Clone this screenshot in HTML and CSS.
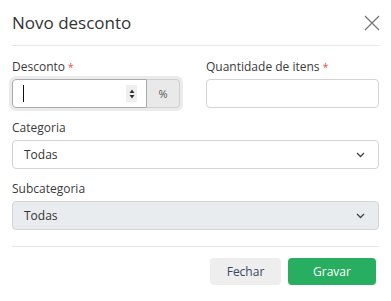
FILE: index.html
```html
<!DOCTYPE html>
<html>

<head>
    <title>Novo desconto</title>
    <link rel="stylesheet" href="styles.css">
</head>

<body>
    <div class="modal">
        <div class="modal-header">
            <h4 class="modal-title">Novo desconto</h4>
            <button class="close" type="button">
                <svg width="16" height="16" viewBox="0 0 16 16">
                    <path d="M1 1 L15 15 M15 1 L1 15" stroke="#777" stroke-width="1.3" fill="none" />
                </svg>
            </button>
        </div>

        <div class="modal-body">
            <div class="row two">
                <div class="group">
                    <label>Desconto <span class="req">*</span></label>
                    <div class="input-group focused">
                        <div class="form-control number">
                            <span class="caret"></span>
                            <span class="spin">
                                <svg width="8" height="12" viewBox="0 0 8 12">
                                    <path d="M1.5 5 L4 1.5 L6.5 5 Z M1.5 7 L4 10.5 L6.5 7 Z" fill="#333" />
                                </svg>
                            </span>
                        </div>
                        <span class="addon">%</span>
                    </div>
                </div>
                <div class="group">
                    <label>Quantidade de itens <span class="req">*</span></label>
                    <div class="form-control"></div>
                </div>
            </div>

            <div class="group">
                <label>Categoria</label>
                <div class="form-control select">
                    <span>Todas</span>
                    <svg width="9" height="6" viewBox="0 0 9 6">
                        <path d="M1 1 L4.5 4.5 L8 1" stroke="#444" stroke-width="1.3" fill="none" />
                    </svg>
                </div>
            </div>

            <div class="group">
                <label>Subcategoria</label>
                <div class="form-control select disabled">
                    <span>Todas</span>
                    <svg width="9" height="6" viewBox="0 0 9 6">
                        <path d="M1 1 L4.5 4.5 L8 1" stroke="#444" stroke-width="1.3" fill="none" />
                    </svg>
                </div>
            </div>
        </div>

        <div class="modal-footer">
            <button class="btn btn-light">Fechar</button>
            <button class="btn btn-success">Gravar</button>
        </div>
    </div>
</body>

</html>
```

FILE: styles.css
```css
* {
    box-sizing: border-box;
}

body {
    margin: 0;
    background: #fff;
    font-family: "Open Sans", "DejaVu Sans", sans-serif;
    color: #333;
}

.modal {
    width: 391px;
    padding: 0 12px;
}

.modal-header {
    display: flex;
    align-items: center;
    justify-content: space-between;
    height: 46px;
    border-bottom: 1px solid #e6e6e6;
}

.modal-title {
    margin: 0;
    font-size: 17px;
    font-weight: 400;
    color: #333;
}

.close {
    border: 0;
    background: none;
    padding: 0;
    margin-right: -1px;
    display: flex;
}

.modal-body {
    padding: 12px 0 5px;
}

.row.two {
    display: grid;
    grid-template-columns: 168px 1fr;
    gap: 26px;
}

.group {
    margin-bottom: 11px;
}

label {
    display: block;
    font-size: 12px;
    line-height: 18px;
    margin-bottom: 3px;
    color: #3a3a3a;
}

.req {
    color: #e74c3c;
    font-size: 10px;
}

.form-control {
    height: 29px;
    border: 1px solid #d4d4d4;
    border-radius: 4px;
    background: #fff;
    font-size: 12px;
    padding: 0 12px;
    display: flex;
    align-items: center;
}

.input-group {
    display: flex;
    border-radius: 4px;
}

.input-group.focused {
    box-shadow: 0 0 0 3px #ebebeb;
}

.input-group .form-control {
    flex: 1;
    border-radius: 4px 0 0 4px;
    border-color: #aaa;
    justify-content: space-between;
    padding: 0 9px 0 10px;
}

.caret {
    width: 1px;
    height: 17px;
    background: #111;
}

.spin {
    display: flex;
    align-items: center;
    justify-content: center;
    width: 11px;
    height: 17px;
    background: #efefef;
}

.addon {
    width: 33px;
    height: 29px;
    display: flex;
    align-items: center;
    justify-content: center;
    font-size: 11px;
    color: #555;
    background: #e9e9e9;
    border: 1px solid #cfcfcf;
    border-left: 0;
    border-radius: 0 4px 4px 0;
}

.select {
    justify-content: space-between;
    padding: 0 13px 0 11px;
}

.select.disabled {
    background: #e9ecef;
}

.modal-footer {
    display: flex;
    justify-content: flex-end;
    gap: 7px;
    border-top: 1px solid #e6e6e6;
    padding: 11px 3px 0 0;
}

.btn {
    height: 27px;
    border: 0;
    border-radius: 4px;
    font-family: inherit;
    font-size: 12px;
}

.btn-light {
    width: 71px;
    background: #eeeeee;
    color: #34495e;
}

.btn-success {
    width: 88px;
    background: #27ae60;
    color: #fff;
    font-weight: 500;
}
```
